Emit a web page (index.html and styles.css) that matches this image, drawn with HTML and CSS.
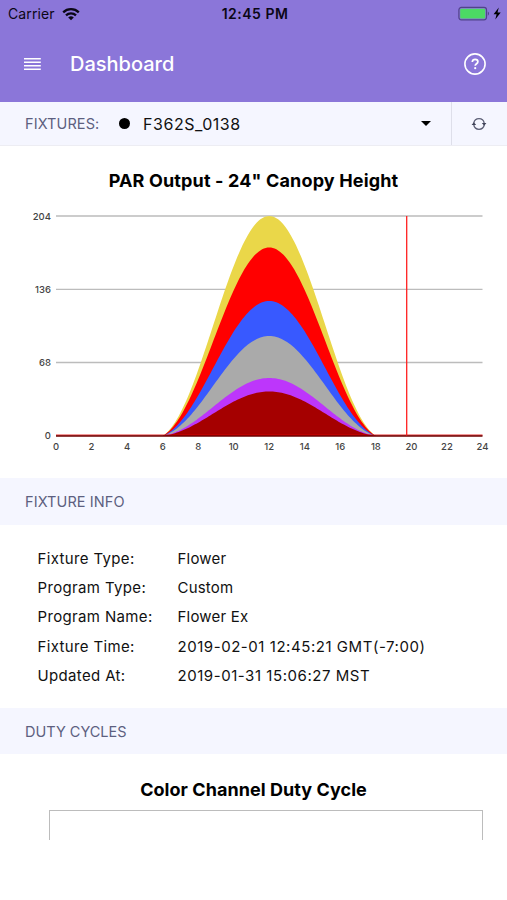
FILE: index.html
```html
<!DOCTYPE html>
<html lang="en">
<head>
    <meta charset="UTF-8">
    <meta name="viewport" content="width=device-width, initial-scale=1.0">
    <title>Dashboard</title>
    <link rel="stylesheet" href="styles.css">
</head>
<body>
    <!-- Header -->
    <header class="header">
        <div class="status-bar">
            <div class="carrier">
                <span>Carrier</span>
                <svg width="18" height="14" viewBox="0 0 18 14" fill="none" stroke="#0b0716" stroke-width="2.3">
                    <path d="M1.2 5.3a11.2 11.2 0 0 1 15.6 0"/>
                    <path d="M4 8.4a7.2 7.2 0 0 1 10 0"/>
                    <path d="M9 13.3L6.2 10.5a4 4 0 0 1 5.6 0z" fill="#0b0716" stroke="none"/>
                </svg>
            </div>
            <span class="clock">12:45 PM</span>
            <div class="battery">
                <svg width="44" height="16" viewBox="0 0 44 16">
                    <rect x="0.9" y="1.4" width="27.6" height="12.4" rx="2.5" fill="none" stroke="#51438a" stroke-width="1.2"/>
                    <rect x="2.2" y="2.7" width="25" height="9.8" rx="1" fill="#4cd964"/>
                    <path d="M29.8 5.5c1.6.6 1.6 3.6 0 4.2z" fill="#51438a"/>
                    <path d="M40.8 1.6L35.6 8.2h3l-1.3 5.3 5.4-7h-3.2z" fill="#000"/>
                </svg>
            </div>
        </div>
        <div class="nav-bar">
            <svg class="menu-icon" width="18" height="14" viewBox="0 0 18 14" stroke="#fff" stroke-width="1.4">
                <path d="M0 1.8h16.8M0 5.3h16.8M0 8.8h16.8M0 12.3h16.8"/>
            </svg>
            <h1>Dashboard</h1>
            <svg class="help-icon" width="24" height="24" viewBox="0 0 24 24" fill="none" stroke="#fff">
                <circle cx="12" cy="12" r="10.1" stroke-width="1.6"/>
                <path d="M9.3 10c0-1.8 1.2-2.7 2.8-2.7s2.8 1 2.8 2.4c0 2-2.7 2-2.7 4" stroke-width="1.7"/>
                <circle cx="12.2" cy="16.2" r="1.1" fill="#fff" stroke="none"/>
            </svg>
        </div>
    </header>

    <!-- Fixture Picker -->
    <div class="fixtures">
        <span class="fixtures-label">FIXTURES:</span>
        <span class="dot"></span>
        <span class="fixture-name">F362S_0138</span>
        <span class="caret"></span>
        <div class="refresh">
            <svg width="16" height="16" viewBox="0 0 16 16" fill="none" stroke="#5c5f76" stroke-width="1.3">
                <path d="M2.8 7a5.3 5.3 0 0 1 10.4 0M13.2 9a5.3 5.3 0 0 1-10.4 0"/>
                <path d="M.6 9h4.6L2.8 6.2z M15.4 7h-4.6l2.4 2.8z" fill="#3f4258" stroke="none"/>
            </svg>
        </div>
    </div>

    <!-- PAR Output Section -->
    <div class="section chart-section">
        <h2>PAR Output - 24" Canopy Height</h2>
        <svg id="par-chart" class="chart" width="507" height="260" viewBox="0 200 507 260">
            <g class="grid">
                <path d="M56 216h426.5M56 289.3h426.5"/>
                <path d="M56 362.5h426.5"/>
            </g>
            <g id="areas"></g>
            <path d="M56 435.1h426.5" stroke="#e00000" stroke-width="1"/>
            <path d="M56 436h426.5" stroke="#6b0000" stroke-width="1.4"/>
            <path d="M406.7 216v219.5" stroke="#ff2020" stroke-width="1.3"/>
            <g class="y-labels">
                <text x="51" y="219.5">204</text>
                <text x="51" y="292.8">136</text>
                <text x="51" y="366.1">68</text>
                <text x="51" y="439.4">0</text>
            </g>
            <g id="x-labels" class="x-labels"></g>
        </svg>
    </div>

    <!-- Fixture Info Section -->
    <div class="section-title">FIXTURE INFO</div>
    <div class="section info">
        <span class="name">Fixture Type:</span><span>Flower</span>
        <span class="name">Program Type:</span><span>Custom</span>
        <span class="name">Program Name:</span><span>Flower Ex</span>
        <span class="name">Fixture Time:</span><span class="date">2019-02-01 12:45:21 GMT(-7:00)</span>
        <span class="name">Updated At:</span><span class="date">2019-01-31 15:06:27 MST</span>
    </div>

    <!-- Duty Cycles Section -->
    <div class="section-title duty-title">DUTY CYCLES</div>
    <div class="section duty">
        <h2>Color Channel Duty Cycle</h2>
        <div class="duty-chart"></div>
    </div>

    <script src="chart.js"></script>
</body>
</html>
```
FILE: chart.js
```js
const svgNS = "http://www.w3.org/2000/svg";
const left = 56;
const hourWidth = 426.5 / 24;
const baseline = 436;

// Stacked channels, tallest first
const channels = [
    { color: "#ead749", height: 220 },
    { color: "#ff0000", height: 188.5 },
    { color: "#3859ff", height: 135 },
    { color: "#aaaaaa", height: 100 },
    { color: "#bd36fb", height: 58 },
    { color: "#a50000", height: 44.5 }
];

// Lights run from hour 6 to hour 18
function areaPath(height) {
    let d = `M${left + 6 * hourWidth} ${baseline}`;
    for (let h = 6; h <= 18; h += 0.1) {
        const s = Math.max(0, Math.sin(Math.PI * (h - 6) / 12));
        const level = 0.2 * s + 0.8 * s * s;
        d += `L${(left + h * hourWidth).toFixed(2)} ${(baseline - height * level).toFixed(2)}`;
    }
    return d + `L${left + 18 * hourWidth} ${baseline}Z`;
}

const areas = document.getElementById("areas");
channels.forEach(channel => {
    const path = document.createElementNS(svgNS, "path");
    path.setAttribute("d", areaPath(channel.height));
    path.setAttribute("fill", channel.color);
    areas.appendChild(path);
});

const xLabels = document.getElementById("x-labels");
for (let h = 0; h <= 24; h += 2) {
    const text = document.createElementNS(svgNS, "text");
    text.setAttribute("x", left + h * hourWidth);
    text.setAttribute("y", 450.3);
    text.textContent = h;
    xLabels.appendChild(text);
}
```
FILE: styles.css
```css
/* General Styles */

body {
    font-family: "Inter", sans-serif;
    margin: 0;
    background-color: #fff;
    color: #111;
    height: 900px;
    overflow: hidden;
}

svg {
    display: block;
}

h2 {
    margin: 0;
    text-align: center;
    font-size: 18px;
    line-height: 24px;
    font-weight: 700;
    letter-spacing: 0.15px;
    color: #000;
}

/* Header */
.header {
    height: 102px;
    background-color: #8b76d9;
}

.status-bar {
    display: grid;
    grid-template-columns: 1fr auto 1fr;
    align-items: center;
    height: 27px;
    padding: 0 5px 0 8px;
    font-size: 14px;
    color: #0b0716;
}

.carrier {
    display: flex;
    align-items: center;
    gap: 7px;
    letter-spacing: 0.1px;
}

.clock {
    font-weight: 600;
    letter-spacing: 0.5px;
}

.battery {
    display: flex;
    justify-content: flex-end;
}

.nav-bar {
    display: flex;
    align-items: center;
    height: 74px;
    padding: 0 20px 0 24px;
}

.nav-bar h1 {
    flex: 1;
    margin: 0 0 0 28px;
    font-size: 20px;
    font-weight: 500;
    color: #fff;
}

/* Fixture Picker */
.fixtures {
    display: flex;
    align-items: center;
    height: 44px;
    padding-left: 25px;
    background-color: #f5f6ff;
    border-bottom: 1px solid #ededf3;
    box-sizing: border-box;
}

.fixtures-label {
    width: 94px;
    font-size: 14.5px;
    letter-spacing: 0.1px;
    color: #5d5f80;
}

.dot {
    width: 11px;
    height: 11px;
    border-radius: 50%;
    background-color: #000;
}

.fixture-name {
    flex: 1;
    margin-left: 13px;
    font-size: 16px;
    letter-spacing: 0.55px;
}

.caret {
    margin-right: 20px;
    border: 5px solid transparent;
    border-top-color: #000;
    border-bottom: 0;
}

.refresh {
    display: flex;
    align-items: center;
    justify-content: center;
    width: 55px;
    height: 100%;
    border-left: 1px solid #dedfea;
}

.refresh svg {
    margin-right: 1px;
}

/* PAR Chart */
.chart-section {
    height: 332px;
    padding-top: 23px;
    box-sizing: border-box;
}

.chart {
    margin-top: 7px;
}

.grid path {
    stroke: #bcbcbc;
    stroke-width: 1.3;
}

.y-labels, .x-labels {
    font-size: 9.5px;
    font-weight: 500;
    fill: #444;
}

.y-labels {
    text-anchor: end;
}

.x-labels {
    text-anchor: middle;
}

/* Fixture Info */
.section-title {
    height: 47px;
    line-height: 48px;
    padding-left: 25px;
    background-color: #f5f6ff;
    color: #5d5f80;
    font-size: 14.5px;
    letter-spacing: 0.1px;
}

.info {
    display: grid;
    grid-template-columns: 140px 1fr;
    grid-auto-rows: 29.3px;
    align-items: center;
    height: 183px;
    padding: 18.6px 0 0 37.5px;
    box-sizing: border-box;
    align-content: start;
    font-size: 15px;
    letter-spacing: 0.2px;
}

.name {
    letter-spacing: 0.35px;
}

.date {
    letter-spacing: 0.55px;
}

/* Duty Cycles */
.duty-title {
    height: 46px;
    line-height: 47px;
    letter-spacing: 0;
}

.duty {
    height: 86px;
    padding-top: 24px;
    box-sizing: border-box;
    overflow: hidden;
}

.duty h2 {
    letter-spacing: 0.05px;
}

.duty-chart {
    margin: 8px 24px 0 49px;
    height: 60px;
    border: 1px solid #bcbcbc;
}
```
